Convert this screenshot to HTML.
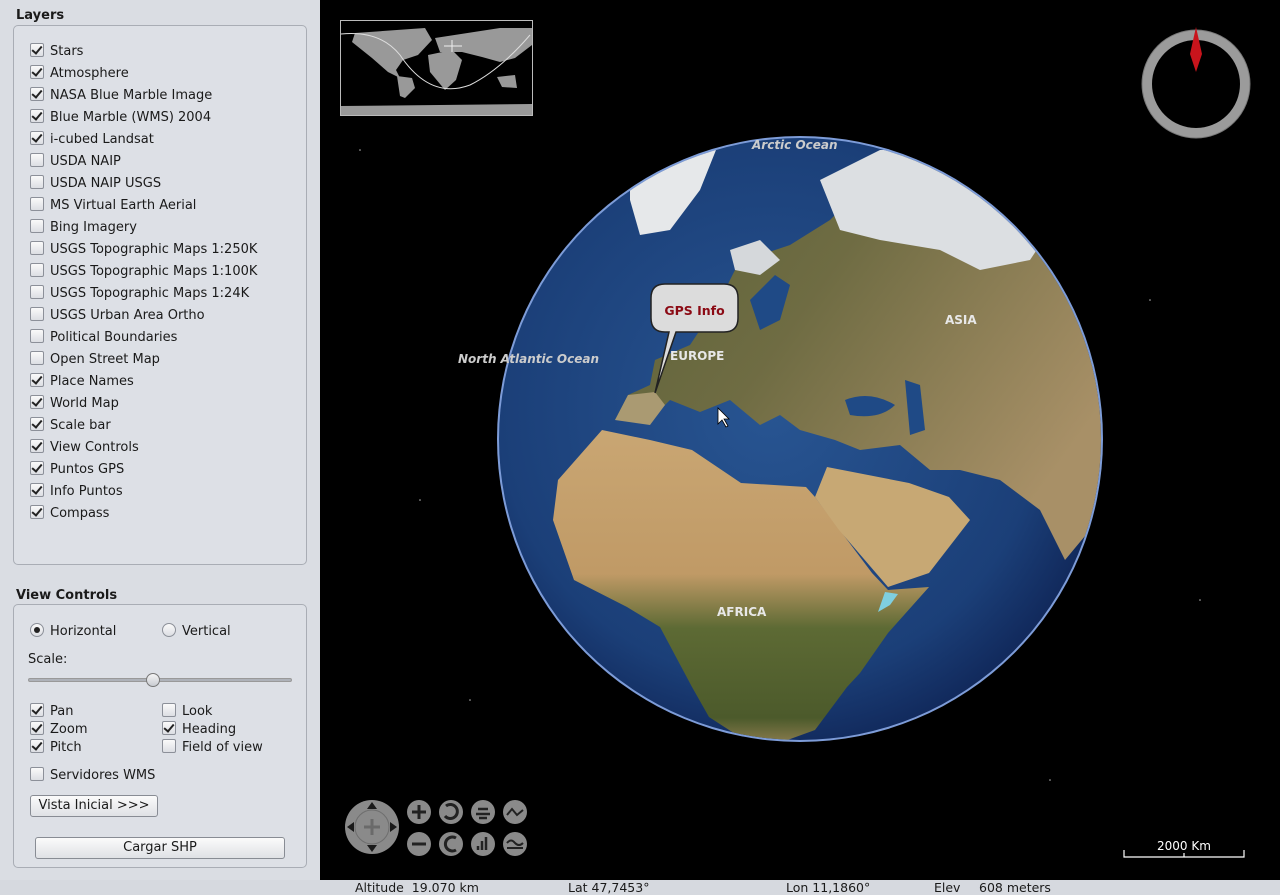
<!DOCTYPE html>
<html><head><meta charset="utf-8"><style>
*{margin:0;padding:0;box-sizing:border-box}
body{width:1280px;height:895px;overflow:hidden;background:#000;font-family:"DejaVu Sans","Liberation Sans",sans-serif;font-size:13px;color:#1a1a1a;position:relative}
#left{position:absolute;left:0;top:0;width:320px;height:880px;background:#dadde3}
.title{position:absolute;left:16px;font-weight:bold;font-size:13px}
.box{position:absolute;left:13px;width:294px;border:1px solid #a9adb5;border-radius:5px;background:#dde0e6}
.it{position:absolute;left:30px;height:16px;line-height:15px;white-space:nowrap}
.cb{display:inline-block;width:14px;height:14px;border:1px solid #8c9099;border-radius:2px;background:linear-gradient(#fafafa,#dcdee3);vertical-align:-2px;margin-right:6px;position:relative}
.cb.c::after{content:"";position:absolute;left:3px;top:0px;width:4px;height:8px;border:solid #222;border-width:0 2px 2px 0;transform:rotate(40deg)}
.rb{display:inline-block;width:14px;height:14px;border:1px solid #8c9099;border-radius:50%;background:linear-gradient(#fafafa,#dcdee3);vertical-align:-2px;margin-right:6px;position:relative}
.rb.c::after{content:"";position:absolute;left:3px;top:3px;width:6px;height:6px;border-radius:50%;background:#222}
.btn{position:absolute;border:1px solid #888c94;border-radius:3px;background:linear-gradient(#fbfbfb,#dfe1e5);text-align:center;line-height:20px;height:22px}
#status{position:absolute;left:0;top:880px;width:1280px;height:15px;background:#d6d9df;font-size:12.5px;line-height:15px}
#status span{position:absolute;top:0;white-space:pre}
</style></head><body>
<div id="left">
<div class="title" style="top:8px">Layers</div>
<div class="box" style="top:25px;height:540px"></div>
<div class="it" style="top:43px"><span class="cb c"></span>Stars</div>
<div class="it" style="top:65px"><span class="cb c"></span>Atmosphere</div>
<div class="it" style="top:87px"><span class="cb c"></span>NASA Blue Marble Image</div>
<div class="it" style="top:109px"><span class="cb c"></span>Blue Marble (WMS) 2004</div>
<div class="it" style="top:131px"><span class="cb c"></span>i-cubed Landsat</div>
<div class="it" style="top:153px"><span class="cb"></span>USDA NAIP</div>
<div class="it" style="top:175px"><span class="cb"></span>USDA NAIP USGS</div>
<div class="it" style="top:197px"><span class="cb"></span>MS Virtual Earth Aerial</div>
<div class="it" style="top:219px"><span class="cb"></span>Bing Imagery</div>
<div class="it" style="top:241px"><span class="cb"></span>USGS Topographic Maps 1:250K</div>
<div class="it" style="top:263px"><span class="cb"></span>USGS Topographic Maps 1:100K</div>
<div class="it" style="top:285px"><span class="cb"></span>USGS Topographic Maps 1:24K</div>
<div class="it" style="top:307px"><span class="cb"></span>USGS Urban Area Ortho</div>
<div class="it" style="top:329px"><span class="cb"></span>Political Boundaries</div>
<div class="it" style="top:351px"><span class="cb"></span>Open Street Map</div>
<div class="it" style="top:373px"><span class="cb c"></span>Place Names</div>
<div class="it" style="top:395px"><span class="cb c"></span>World Map</div>
<div class="it" style="top:417px"><span class="cb c"></span>Scale bar</div>
<div class="it" style="top:439px"><span class="cb c"></span>View Controls</div>
<div class="it" style="top:461px"><span class="cb c"></span>Puntos GPS</div>
<div class="it" style="top:483px"><span class="cb c"></span>Info Puntos</div>
<div class="it" style="top:505px"><span class="cb c"></span>Compass</div>

<div class="title" style="top:588px">View Controls</div>
<div class="box" style="top:604px;height:264px"></div>
<div class="it" style="top:623px"><span class="rb c"></span>Horizontal</div>
<div class="it" style="top:623px;left:162px"><span class="rb"></span>Vertical</div>
<div class="it" style="top:652px;left:28px">Scale:</div>
<div style="position:absolute;left:28px;top:678px;width:264px;height:4px;border-radius:2px;background:#aeb2b9;border:1px solid #999"></div>
<div style="position:absolute;left:146px;top:673px;width:14px;height:14px;border-radius:50%;background:linear-gradient(#f4f4f4,#c9ccd2);border:1px solid #777"></div>
<div class="it" style="top:703px"><span class="cb c"></span>Pan</div>
<div class="it" style="top:721px"><span class="cb c"></span>Zoom</div>
<div class="it" style="top:739px"><span class="cb c"></span>Pitch</div>
<div class="it" style="top:703px;left:162px"><span class="cb"></span>Look</div>
<div class="it" style="top:721px;left:162px"><span class="cb c"></span>Heading</div>
<div class="it" style="top:739px;left:162px"><span class="cb"></span>Field of view</div>
<div class="it" style="top:767px"><span class="cb"></span>Servidores WMS</div>
<div class="btn" style="left:30px;top:795px;width:128px">Vista Inicial &gt;&gt;&gt;</div>
<div class="btn" style="left:35px;top:837px;width:250px">Cargar SHP</div>
</div>

<svg style="position:absolute;left:0;top:0" width="1280" height="880">
<defs>
<radialGradient id="oc" cx="0.45" cy="0.45" r="0.6"><stop offset="0" stop-color="#285592"/><stop offset="0.75" stop-color="#1b3f78"/><stop offset="1" stop-color="#0f2455"/></radialGradient>
<linearGradient id="af" x1="0" y1="0" x2="0" y2="1"><stop offset="0" stop-color="#c9a673"/><stop offset="0.45" stop-color="#c09a66"/><stop offset="0.62" stop-color="#5d6a34"/><stop offset="0.9" stop-color="#4c5a2b"/><stop offset="1" stop-color="#9a8456"/></linearGradient>
<linearGradient id="eu" x1="0" y1="0" x2="1" y2="0.6"><stop offset="0" stop-color="#5a6137"/><stop offset="0.45" stop-color="#6f6c43"/><stop offset="1" stop-color="#a89067"/></linearGradient>
<clipPath id="gc"><circle cx="800" cy="439" r="301"/></clipPath>
</defs>
<g fill="#fff" opacity="0.7"><circle cx="360" cy="150" r="0.8"/><circle cx="420" cy="500" r="0.8"/><circle cx="1150" cy="300" r="0.8"/><circle cx="1200" cy="600" r="0.8"/><circle cx="470" cy="700" r="0.8"/><circle cx="1050" cy="780" r="0.8"/></g>
<circle cx="800" cy="439" r="303" fill="#7d9cd8"/>
<circle cx="800" cy="439" r="301" fill="url(#oc)"/>
<g clip-path="url(#gc)">
<path fill="url(#eu)" d="M615 420 L628 395 L650 385 L655 360 L690 345 L700 330 L720 300 L735 270 L760 255 L790 245 L830 220 L860 190 L900 150 L1000 160 L1080 230 L1110 300 L1110 460 L1090 530 L1065 560 L1040 510 L1000 480 L960 470 L930 470 L900 445 L860 450 L835 440 L800 430 L780 415 L760 425 L730 400 L700 412 L670 400 L650 420 Z"/>
<path fill="#1f4a86" d="M750 300 L775 275 L790 285 L780 320 L760 330 Z"/>
<path fill="#1f4a86" d="M845 400 Q870 390 895 405 Q880 420 850 415 Z"/>
<path fill="#1f4a86" d="M905 380 L920 385 L925 430 L910 435 Z"/>
<path fill="#aa9a72" d="M615 420 L628 395 L655 392 L665 405 L650 425 Z"/>
<path fill="#e6e8ea" d="M630 140 L720 140 L700 190 L670 230 L640 235 L630 200 Z"/>
<path fill="#dcdfe2" d="M820 180 L880 150 L960 150 L1010 190 L1050 230 L1030 260 L980 270 L940 250 L880 240 L840 230 Z"/>
<path fill="#d5d8db" d="M730 250 L760 240 L780 260 L760 275 L735 270 Z"/>
<path fill="url(#af)" d="M558 480 L602 430 L650 440 L692 450 L741 483 L806 487 L815 497 L872 573 L888 590 L929 587 L888 633 L860 673 L847 687 L815 730 L760 750 L709 717 L692 687 L660 627 L627 607 L574 580 L553 520 Z"/>
<path fill="#c7a874" d="M827 467 L909 483 L949 497 L970 520 L929 573 L888 587 L839 530 L815 497 Z"/>
</g>
<text x="752" y="149" fill="#ccc" font-size="12" font-style="italic" font-weight="bold" font-family="DejaVu Sans,sans-serif">Arctic Ocean</text>
<text x="458" y="363" fill="#ccc" font-size="12" font-style="italic" font-weight="bold" font-family="DejaVu Sans,sans-serif">North Atlantic Ocean</text>
<text x="670" y="360" fill="#e8e8e8" font-size="12" font-weight="bold" font-family="DejaVu Sans,sans-serif">EUROPE</text>
<text x="945" y="324" fill="#e8e8e8" font-size="12" font-weight="bold" font-family="DejaVu Sans,sans-serif">ASIA</text>
<text x="717" y="616" fill="#e8e8e8" font-size="12" font-weight="bold" font-family="DejaVu Sans,sans-serif">AFRICA</text>
<path d="M665 284 H724 Q738 284 738 298 V318 Q738 332 724 332 H676 L655 393 L669 332 H665 Q651 332 651 318 V298 Q651 284 665 284 Z" fill="#dcdcdc" stroke="#222" stroke-width="1.5"/>
<text x="694.5" y="315" text-anchor="middle" fill="#8b0a14" font-size="12.5" font-weight="bold" font-family="DejaVu Sans,sans-serif">GPS Info</text>
<path d="M878 612 L885 592 L898 594 L890 605 Z" fill="#7fcfe0"/>
<path d="M718 408 L718 424 L722 420 L726 427 L728 426 L724 419 L729 419 Z" fill="#fff" stroke="#000" stroke-width="0.8"/>
<rect x="340.5" y="20.5" width="192" height="95" fill="#000" stroke="#bbb"/>
<g fill="#999">
<path d="M355 33 L425 28 L432 40 L418 55 L403 60 L396 70 L400 78 L388 72 L372 58 L352 42 Z"/>
<path d="M397 76 L412 78 L415 88 L405 98 L400 96 Z"/>
<path d="M428 55 L452 50 L462 60 L456 80 L445 90 L430 72 Z"/>
<path d="M435 38 L500 28 L532 28 L532 45 L515 58 L500 62 L482 57 L462 52 L440 52 Z"/>
<path d="M497 77 L515 75 L517 88 L502 87 Z"/>
<path d="M341 106 L532 104 L532 115 L341 115 Z"/>
</g>
<path d="M341 34 Q380 30 400 55 Q430 100 470 85 Q500 70 530 35" fill="none" stroke="#ddd" stroke-width="1"/>
<path d="M452 40 V52 M444 46 H462" stroke="#eee" stroke-width="1"/>
<circle cx="1196" cy="84" r="49" fill="none" stroke="#9b9b9b" stroke-width="10"/>
<circle cx="1196" cy="84" r="54" fill="none" stroke="#777" stroke-width="1"/>
<path d="M1196 27 L1202 54 L1196 72 L1190 54 Z" fill="#c8141c"/>
<circle cx="372" cy="827" r="27" fill="#8a8a8a"/>
<circle cx="372" cy="827" r="17" fill="none" stroke="#6e6e6e" stroke-width="1"/>
<g fill="#1a1a1a"><path d="M372 802 l-5 7 h10z M372 852 l-5 -7 h10z M347 827 l7 -5 v10z M397 827 l-7 -5 v10z"/></g>
<path d="M372 819 V835 M364 827 H380" stroke="#6a6a6a" stroke-width="3"/>
<g fill="#8a8a8a"><circle cx="419" cy="812" r="12"/><circle cx="451" cy="812" r="12"/><circle cx="483" cy="812" r="12"/><circle cx="515" cy="812" r="12"/><circle cx="419" cy="844" r="12"/><circle cx="451" cy="844" r="12"/><circle cx="483" cy="844" r="12"/><circle cx="515" cy="844" r="12"/></g>
<g stroke="#222" stroke-width="3" fill="none">
<path d="M412 812 H426 M419 805 V819"/><path d="M412 844 H426"/>
<path d="M446 806 A7 7 0 1 1 445 816"/><path d="M456 838 A7 7 0 1 0 456 850"/>
<path d="M478 809 H488 M476 814 H490 M479 818 H487" stroke-width="2.5"/>
<path d="M478 846 V850 M482 841 V850 M486 837 V850" stroke-width="2.5"/>
<path d="M507 815 L512 809 L517 815 L523 810" stroke-width="2"/>
<path d="M507 843 Q511 838 515 843 Q519 847 523 843 M507 848 H523" stroke-width="2"/>
</g>
<path d="M1124 850 V857 H1244 V850 M1184 853 V857" stroke="#fff" fill="none" stroke-width="1.2"/>
<text x="1184" y="850" text-anchor="middle" fill="#fff" font-size="12" font-family="DejaVu Sans,sans-serif">2000 Km</text>
</svg>
<div id="status">
<span style="left:355px">Altitude  19.070 km</span>
<span style="left:568px">Lat 47,7453°</span>
<span style="left:786px">Lon 11,1860°</span>
<span style="left:934px">Elev</span>
<span style="left:979px">608 meters</span>
</div>
</body></html>
